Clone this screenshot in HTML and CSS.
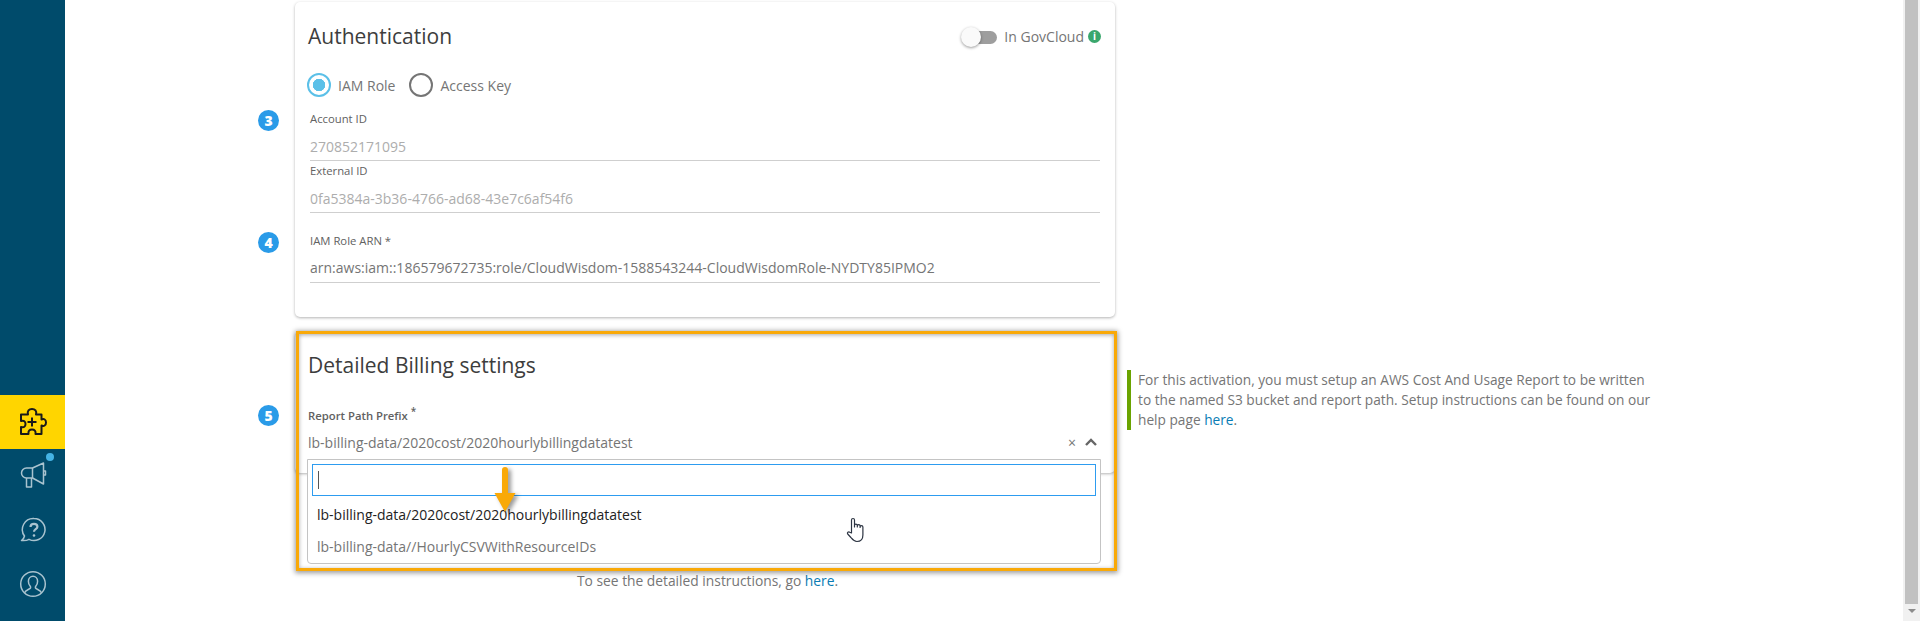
FILE: index.html
```html
<!DOCTYPE html>
<html lang="en">
<head>
    <meta charset="UTF-8">
    <title>Detailed Billing settings</title>
    <link rel="stylesheet" href="styles.css">
</head>
<body>
    <nav class="sidebar">
        <a class="nav-item active" href="#">
            <svg width="28" height="28" viewBox="0 0 28 28" fill="none" stroke="#1a1a1a" stroke-width="2" stroke-linejoin="round">
                <path d="M2 6.500H9C8 3 10 1 13 1s5 2 4 5.500h5.500v5C25 10.500 27 11.500 27 14.500s-2 4-4.500 3V26h-6c.5-3-1-4.500-3.500-4.500S9 23 9.500 26H2v-7c3 1 4.500-.5 4.500-3S5 12 2 13z"/>
                <path d="M13 9.500v9M8.500 14h9"/>
            </svg>
        </a>
        <a class="nav-item" href="#">
            <span class="nav-dot"></span>
            <svg width="28" height="28" viewBox="0 0 28 28" fill="none" stroke="#a9c3cf" stroke-width="1.500" stroke-linejoin="round">
                <path d="M13.500 6L24.500 1V22L13.500 16H7.500a5 5 0 0 1 0-10z"/>
                <path d="M13.500 6v10M7.500 16v9h5v-9M24.500 9h2v4h-2"/>
            </svg>
        </a>
        <a class="nav-item" href="#">
            <svg width="28" height="28" viewBox="0 0 28 28" fill="none" stroke="#a9c3cf" stroke-width="1.500" stroke-linejoin="round">
                <path d="M15 2.500a11 11 0 1 1-5 20.800c-2 1.200-4.500 1.500-7.500 1.200 1.500-1 2.600-2.500 3-4.500A11 11 0 0 1 15 2.500z"/>
                <path d="M11.500 11c0-2 1.500-3.200 3.500-3.200s3.400 1.200 3.400 2.900c0 2.500-3.400 2.500-3.400 5" stroke-width="2.200"/>
                <circle cx="15" cy="19.500" r="1.300" fill="#a9c3cf" stroke="none"/>
            </svg>
        </a>
        <a class="nav-item" href="#">
            <svg width="28" height="28" viewBox="0 0 28 28" fill="none" stroke="#a9c3cf" stroke-width="1.500">
                <circle cx="14" cy="14" r="12.300"/>
                <path d="M5.500 23c.5-3 5-3.500 6-5 .4-.7.200-1.300-.4-2-1.200-1.300-1.700-3-1.700-4.700 0-3 2-5 4.600-5s4.600 2 4.600 5c0 1.700-.5 3.400-1.700 4.700-.6.700-.8 1.300-.4 2 1 1.500 5.500 2 6 5"/>
            </svg>
        </a>
    </nav>

    <main class="content">
        <section class="card auth-card">
            <div class="card-head">
                <h2>Authentication</h2>
                <div class="govcloud">
                    <span class="toggle"></span>
                    <span>In GovCloud</span>
                    <span class="info-icon">i</span>
                </div>
            </div>
            <div class="radios">
                <label class="radio checked">IAM Role</label>
                <label class="radio">Access Key</label>
            </div>
            <div class="field">
                <span class="step">3</span>
                <div class="field-label">Account ID</div>
                <div class="field-value muted">270852171095</div>
            </div>
            <div class="field field-tight">
                <div class="field-label">External ID</div>
                <div class="field-value muted">0fa5384a-3b36-4766-ad68-43e7c6af54f6</div>
            </div>
            <div class="field field-arn">
                <span class="step">4</span>
                <div class="field-label">IAM Role ARN *</div>
                <div class="field-value">arn:aws:iam::186579672735:role/CloudWisdom-1588543244-CloudWisdomRole-NYDTY85IPMO2</div>
            </div>
        </section>

        <div class="billing-row">
            <section class="card billing-card">
                <h2>Detailed Billing settings</h2>
                <div class="field billing-field">
                    <span class="step">5</span>
                    <div class="field-label strong">Report Path Prefix <sup>*</sup></div>
                    <div class="select-value">
                        <span>lb-billing-data/2020cost/2020hourlybillingdatatest</span>
                        <span class="select-clear">&times;</span>
                        <svg class="select-caret" width="12" height="8" viewBox="0 0 12 8" fill="none" stroke="#666" stroke-width="2.400"><path d="M1 7l5-5 5 5"/></svg>
                    </div>
                </div>
                <div class="dropdown">
                    <div class="search-box"><span class="search-caret"></span></div>
                    <div class="option selected">lb-billing-data/2020cost/2020hourlybillingdatatest</div>
                    <div class="option">lb-billing-data//HourlyCSVWithResourceIDs</div>
                </div>
                <div class="highlight"></div>
                <svg class="arrow" width="32" height="50" viewBox="0 0 32 50">
                    <path d="M13 4a3 3 0 0 1 6 0V27h7.500L16 46 5.500 27H13z" fill="#f9a908"/>
                </svg>
                <svg class="hand" width="20" height="26" viewBox="0 0 20 26" fill="#fff" stroke="#2c3442" stroke-width="1.200" stroke-linejoin="round">
                    <path d="M5.500 16V3a1.500 1.500 0 0 1 3 0v7-1.500a1.400 1.400 0 0 1 2.800 0V10 9a1.400 1.400 0 0 1 2.800 0v1.500-.5a1.400 1.400 0 0 1 2.800 0v8c0 4-2 6.500-6 6.500-3 0-4-1.500-6-4l-3.200-3.500c-1-1.300.8-2.800 2-1.700z"/>
                </svg>
            </section>
            <aside class="note">
                For this activation, you must setup an AWS Cost And Usage Report to be written<br>
                to the named S3 bucket and report path. Setup instructions can be found on our<br>
                help page <a href="#">here</a>.
            </aside>
        </div>

        <p class="foot-note">To see the detailed instructions, go <a href="#">here</a>.</p>
    </main>

    <div class="scrollbar">
        <div class="scroll-thumb"></div>
        <div class="scroll-down"></div>
    </div>
</body>
</html>
```

FILE: styles.css
```css
* {
    box-sizing: border-box;
}

html,
body {
    height: 100%;
}

body {
    margin: 0;
    display: flex;
    overflow: hidden;
    background-color: #fff;
    color: #757575;
    font-family: "Open Sans", Arial, sans-serif;
    font-size: 14px;
}

a {
    color: #0a7cb4;
    text-decoration: none;
}

h2 {
    margin: 0;
    color: #3d3d3d;
    font-size: 21px;
    font-weight: 400;
    line-height: 28px;
}

.sidebar {
    width: 65px;
    flex-shrink: 0;
    display: flex;
    flex-direction: column;
    justify-content: flex-end;
    padding-bottom: 10px;
    background-color: #004b6b;
}

.nav-item {
    position: relative;
    height: 54px;
    display: flex;
    align-items: center;
    justify-content: center;
}

.nav-item.active {
    background-color: #ffd500;
}

.nav-dot {
    position: absolute;
    top: 4px;
    left: 46px;
    width: 8px;
    height: 8px;
    border-radius: 50%;
    background-color: #45b4e5;
}

.content {
    flex: 1;
    padding: 2px 0 0 230px;
}

.card {
    position: relative;
    width: 820px;
    border-radius: 5px;
    background-color: #fff;
    box-shadow: 0 1px 3px rgba(0, 0, 0, 0.3);
}

.auth-card {
    height: 315px;
    padding: 20px 15px 0 13px;
}

.card-head {
    display: flex;
    align-items: center;
    justify-content: space-between;
}

.govcloud {
    display: flex;
    align-items: center;
    gap: 9px;
    padding-right: 0;
    margin-right: -1px;
    font-size: 14px;
}

.toggle {
    position: relative;
    width: 26px;
    height: 13px;
    margin-top: 2px;
    margin-right: -2px;
    border-radius: 7px;
    background-color: #9e9e9e;
}

.toggle::before {
    content: "";
    position: absolute;
    top: -4px;
    left: -10px;
    width: 20px;
    height: 20px;
    border-radius: 50%;
    background-color: #fafafa;
    box-shadow: 0 1px 3px rgba(0, 0, 0, 0.4);
}

.info-icon {
    width: 13px;
    height: 13px;
    margin-left: -5px;
    border-radius: 50%;
    background-color: #3aa76d;
    color: #fff;
    font-size: 10px;
    font-weight: 700;
    line-height: 13px;
    text-align: center;
}

.radios {
    display: flex;
    gap: 14px;
    margin-top: 23px;
    margin-left: -1px;
    height: 24px;
    align-items: center;
}

.radio {
    display: flex;
    align-items: center;
    gap: 7px;
}

.radio::before {
    content: "";
    width: 20px;
    height: 20px;
    border: 2px solid #757575;
    border-radius: 50%;
}

.radio.checked::before {
    border-color: #5bc0e8;
    background: radial-gradient(circle, #5bc0e8 0 6px, #fff 6.500px);
}

.field {
    position: relative;
    margin-left: 2px;
    margin-right: 0;
}

.radios + .field {
    margin-top: 12px;
}

.field-tight {
    margin-top: 0;
}

.field-arn {
    margin-top: 18px;
}

.field-label {
    height: 20px;
    color: #616161;
    font-size: 11.300px;
    line-height: 20px;
}

.field-label.strong {
    font-weight: 600;
}

.field-label sup {
    font-size: 10px;
    line-height: 0;
}

.field-value {
    height: 32px;
    padding-top: 7px;
    border-bottom: 1px solid #cfcfcf;
    line-height: 20px;
}

.field-value.muted {
    padding-top: 8px;
    color: #adadad;
}

.step {
    position: absolute;
    top: 1px;
    left: -52px;
    width: 21px;
    height: 21px;
    border-radius: 50%;
    background-color: #2a9be8;
    color: #fff;
    font-size: 14px;
    font-weight: 800;
    line-height: 21px;
    text-align: center;
}

.billing-row {
    display: flex;
    align-items: flex-start;
    gap: 12px;
    margin-top: 15px;
}

.billing-card {
    height: 141px;
    flex-shrink: 0;
    padding: 19px 12px 0 13px;
}

.billing-field {
    margin: 27px 0 0 0;
}

.billing-field .step {
    top: -1px;
    left: -50px;
}

.select-value {
    display: flex;
    align-items: center;
    height: 26px;
    margin-top: 3px;
}

.select-clear {
    margin-left: auto;
    font-size: 14px;
}

.select-caret {
    margin: 0 6px 0 9px;
}

.dropdown {
    position: absolute;
    z-index: 2;
    top: 127px;
    left: 12px;
    width: 794px;
    height: 105px;
    padding: 4px 4px;
    border: 1px solid #c4c4c4;
    border-radius: 0 0 4px 4px;
    background-color: #fff;
}

.search-box {
    height: 32px;
    padding: 6px 5px;
    border: 1px solid #2d9cf0;
}

.search-caret {
    display: block;
    width: 1px;
    height: 18px;
    background-color: #555;
}

.option {
    height: 32px;
    padding: 0 5px;
    line-height: 37px;
}

.option.selected {
    color: #222;
}

.highlight {
    position: absolute;
    z-index: 3;
    top: -1px;
    left: 1px;
    width: 821px;
    height: 240px;
    border: 3px solid #f9a908;
    box-shadow: 0 1px 5px 1px rgba(0, 0, 0, 0.4), inset 0 1px 4px rgba(0, 0, 0, 0.35);
    pointer-events: none;
}

.arrow {
    position: absolute;
    z-index: 4;
    top: 134px;
    left: 194px;
    filter: drop-shadow(3px 2px 2px rgba(0, 0, 0, 0.4));
}

.hand {
    position: absolute;
    z-index: 4;
    top: 185px;
    left: 551px;
}

.note {
    margin-top: 38px;
    padding-left: 7px;
    border-left: 4px solid #6aa300;
    font-size: 13.700px;
    line-height: 20px;
    white-space: nowrap;
}

.foot-note {
    margin: 98px 0 0 0;
    padding-left: 282px;
    width: 820px;
    font-size: 13.800px;
    line-height: 20px;
}

.scrollbar {
    width: 17px;
    flex-shrink: 0;
    display: flex;
    flex-direction: column;
    padding: 0 2px;
    background-color: #f1f1f1;
}

.scroll-thumb {
    height: 604px;
    background-color: #c1c1c1;
}

.scroll-down {
    width: 0;
    height: 0;
    margin: 5px auto 0;
    border-top: 4px solid #8c8c8c;
    border-left: 4px solid transparent;
    border-right: 4px solid transparent;
}
```
